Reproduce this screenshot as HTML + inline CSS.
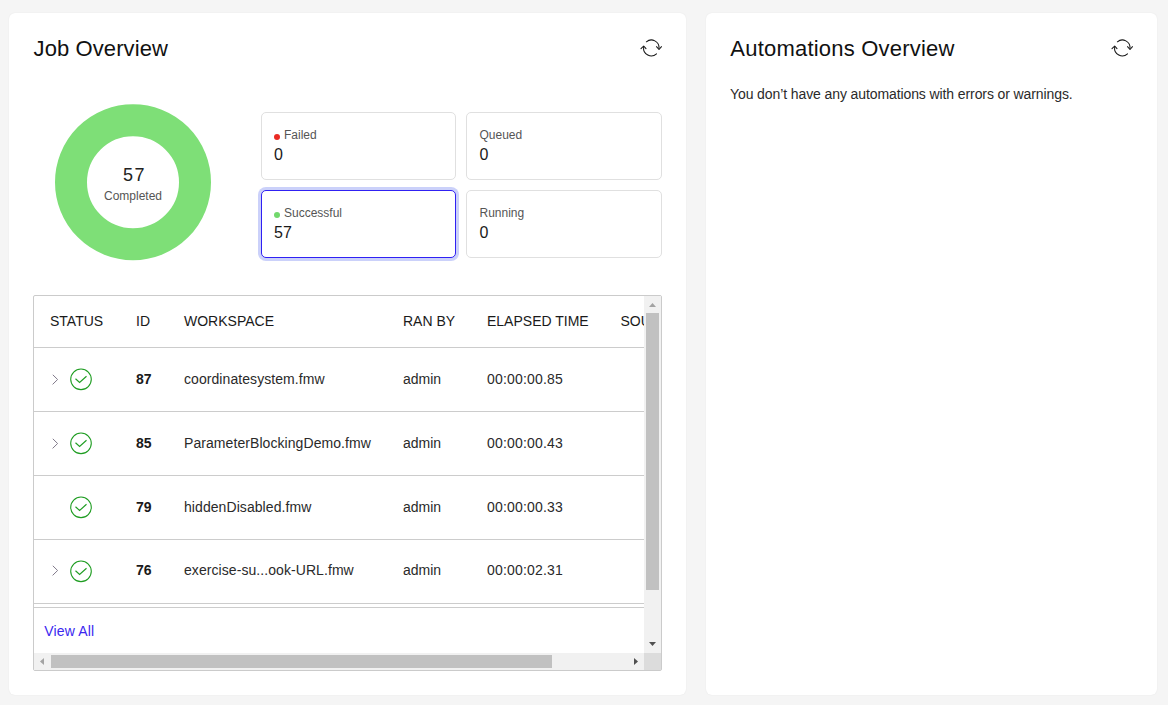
<!DOCTYPE html>
<html><head><meta charset="utf-8">
<style>
*{box-sizing:border-box;margin:0;padding:0}
html,body{width:1168px;height:705px;overflow:hidden;background:#f5f5f5;font-family:"Liberation Sans",sans-serif;color:#1f1f1f}
.a{position:absolute;white-space:nowrap}
.card{position:absolute;background:#fff;border-radius:6px;border-radius:6px;box-shadow:0 0 1.5px rgba(0,0,0,.08)}
.title{font-size:22px;line-height:22px;color:#111}
.stat{position:absolute;border:1px solid #e0e0e0;border-radius:5px;background:#fff}
.lbl{font-size:12px;line-height:12px;color:#555}
.val{font-size:16px;line-height:16px;color:#1a1a1a}
.dot{position:absolute;width:6px;height:6px;border-radius:50%}
.t14{font-size:14px;line-height:14px}
.hd{color:#1a1a1a}
.cell{color:#2a2a2a}
.b{font-weight:bold;color:#1a1a1a}
.hl{position:absolute;left:34px;width:610px;height:1px;background:#cccccc}
</style></head>
<body>
<!-- Job Overview card -->
<div class="card" style="left:9px;top:13px;width:677px;height:682px"></div>
<div class="a title" style="left:33.6px;top:38px;letter-spacing:0.09px">Job Overview</div>
<svg class="a" style="left:636px;top:33px" width="30" height="30" viewBox="636 33 30 30">
  <g fill="none" stroke="#161616" stroke-width="1.05" stroke-linecap="round" stroke-linejoin="round">
    <path d="M646.4 41.8 A7.7 7.7 0 0 1 659 48.3"/>
    <path d="M656.5 46.7 L659 49.5 L661.5 46.7"/>
    <path d="M656.5 53.8 A7.7 7.7 0 0 1 643.6 47.3"/>
    <path d="M641 48.7 L643.7 46 L646 48.7"/>
  </g>
</svg>

<!-- donut -->
<svg class="a" style="left:0;top:0" width="260" height="290">
  <circle cx="133" cy="182.2" r="62" fill="none" stroke="#7edf77" stroke-width="32"/>
</svg>
<div class="a" style="left:123px;top:166px;font-size:18px;line-height:18px;letter-spacing:1.6px;color:#222">57</div>
<div class="a" style="left:93px;top:190px;width:80px;text-align:center;font-size:12px;line-height:12px;color:#555">Completed</div>

<!-- stats -->
<div class="stat" style="left:261px;top:112px;width:195px;height:68px"></div>
<div class="dot" style="left:274px;top:133.8px;background:#ea2a24"></div>
<div class="a lbl" style="left:284px;top:129px">Failed</div>
<div class="a val" style="left:274px;top:147px">0</div>

<div class="stat" style="left:466px;top:112px;width:196px;height:68px"></div>
<div class="a lbl" style="left:479.5px;top:129px">Queued</div>
<div class="a val" style="left:479.5px;top:147px">0</div>

<div class="stat" style="left:261px;top:190px;width:195px;height:68px;border-color:#3021f3;box-shadow:0 0 0 3px #cbd1fa"></div>
<div class="dot" style="left:274px;top:211.8px;background:#72d86c"></div>
<div class="a lbl" style="left:284px;top:207px">Successful</div>
<div class="a val" style="left:274px;top:225px">57</div>

<div class="stat" style="left:466px;top:190px;width:196px;height:68px"></div>
<div class="a lbl" style="left:479.5px;top:207px">Running</div>
<div class="a val" style="left:479.5px;top:225px">0</div>

<!-- table container -->
<div class="a" style="left:33px;top:295px;width:629px;height:376px;border:1px solid #cbcbcb;border-radius:2px;background:#fff;overflow:hidden">
</div>
<div class="a t14 hd" style="left:50px;top:314px">STATUS</div>
<div class="a t14 hd" style="left:136px;top:314px">ID</div>
<div class="a t14 hd" style="left:184px;top:314px">WORKSPACE</div>
<div class="a t14 hd" style="left:403px;top:314px">RAN BY</div>
<div class="a t14 hd" style="left:487px;top:314px">ELAPSED TIME</div>
<div class="a" style="left:34px;top:296px;width:610px;height:50px;overflow:hidden">
  <div class="a t14 hd" style="left:586.5px;top:18px">SOURCE</div>
</div>
<div class="hl" style="top:347px"></div>
<div class="hl" style="top:411px"></div>
<div class="hl" style="top:475px"></div>
<div class="hl" style="top:539px"></div>
<div class="hl" style="top:603px"></div>
<div class="hl" style="top:607px"></div>

<!-- rows -->
<svg class="a" style="left:46px;top:366px" width="16" height="28"><path d="M6.8 8.8 L11.6 13.5 L6.6 18.4" fill="none" stroke="#7a7385" stroke-width="0.95"/></svg>
<svg class="a" style="left:66px;top:366px" width="30" height="28"><circle cx="15" cy="13.3" r="10.3" fill="none" stroke="#1f9d22" stroke-width="1.1"/><path d="M9.5 12.8 L13.6 16.5 L20.5 10.3" fill="none" stroke="#1f9d22" stroke-width="1.15"/></svg>
<div class="a t14 b" style="left:136px;top:372px">87</div>
<div class="a t14 cell" style="left:184px;top:372px;letter-spacing:0.07px">coordinatesystem.fmw</div>
<div class="a t14 cell" style="left:403px;top:372px">admin</div>
<div class="a t14 cell" style="left:487px;top:372px;letter-spacing:0.18px">00:00:00.85</div>
<svg class="a" style="left:46px;top:430px" width="16" height="28"><path d="M6.8 8.8 L11.6 13.5 L6.6 18.4" fill="none" stroke="#7a7385" stroke-width="0.95"/></svg>
<svg class="a" style="left:66px;top:430px" width="30" height="28"><circle cx="15" cy="13.3" r="10.3" fill="none" stroke="#1f9d22" stroke-width="1.1"/><path d="M9.5 12.8 L13.6 16.5 L20.5 10.3" fill="none" stroke="#1f9d22" stroke-width="1.15"/></svg>
<div class="a t14 b" style="left:136px;top:436px">85</div>
<div class="a t14 cell" style="left:184px;top:436px;letter-spacing:0.07px">ParameterBlockingDemo.fmw</div>
<div class="a t14 cell" style="left:403px;top:436px">admin</div>
<div class="a t14 cell" style="left:487px;top:436px;letter-spacing:0.18px">00:00:00.43</div>
<svg class="a" style="left:66px;top:494px" width="30" height="28"><circle cx="15" cy="13.3" r="10.3" fill="none" stroke="#1f9d22" stroke-width="1.1"/><path d="M9.5 12.8 L13.6 16.5 L20.5 10.3" fill="none" stroke="#1f9d22" stroke-width="1.15"/></svg>
<div class="a t14 b" style="left:136px;top:500px">79</div>
<div class="a t14 cell" style="left:184px;top:500px;letter-spacing:0.07px">hiddenDisabled.fmw</div>
<div class="a t14 cell" style="left:403px;top:500px">admin</div>
<div class="a t14 cell" style="left:487px;top:500px;letter-spacing:0.18px">00:00:00.33</div>
<svg class="a" style="left:46px;top:557px" width="16" height="28"><path d="M6.8 8.8 L11.6 13.5 L6.6 18.4" fill="none" stroke="#7a7385" stroke-width="0.95"/></svg>
<svg class="a" style="left:66px;top:557.5px" width="30" height="28"><circle cx="15" cy="13.3" r="10.3" fill="none" stroke="#1f9d22" stroke-width="1.1"/><path d="M9.5 12.8 L13.6 16.5 L20.5 10.3" fill="none" stroke="#1f9d22" stroke-width="1.15"/></svg>
<div class="a t14 b" style="left:136px;top:563px">76</div>
<div class="a t14 cell" style="left:184px;top:563px;letter-spacing:0.07px">exercise-su...ook-URL.fmw</div>
<div class="a t14 cell" style="left:403px;top:563px">admin</div>
<div class="a t14 cell" style="left:487px;top:563px;letter-spacing:0.18px">00:00:02.31</div>
<div class="a t14" style="left:44.3px;top:624px;color:#3b27ef;letter-spacing:0.15px">View All</div>

<!-- scrollbars -->
<div class="a" style="left:644px;top:296px;width:17px;height:357px;background:#f1f1f1"></div>
<div class="a" style="left:646px;top:313px;width:13px;height:277px;background:#c1c1c1"></div>
<svg class="a" style="left:644px;top:296px" width="17" height="17"><path d="M5 11 L8.5 7 L12 11 Z" fill="#a3a3a3"/></svg>
<svg class="a" style="left:644px;top:636px" width="17" height="17"><path d="M5 6 L8.5 10 L12 6 Z" fill="#505050"/></svg>
<div class="a" style="left:34px;top:653px;width:610px;height:17px;background:#f1f1f1"></div>
<div class="a" style="left:51px;top:655px;width:501px;height:13px;background:#c1c1c1"></div>
<svg class="a" style="left:34px;top:653px" width="17" height="17"><path d="M10 5 L6 8.5 L10 12 Z" fill="#a3a3a3"/></svg>
<svg class="a" style="left:627px;top:653px" width="17" height="17"><path d="M7 5 L11 8.5 L7 12 Z" fill="#505050"/></svg>
<div class="a" style="left:644px;top:653px;width:17px;height:17px;background:#dcdcdc"></div>

<!-- Automations card -->
<div class="card" style="left:706px;top:13px;width:451px;height:682px"></div>
<div class="a title" style="left:730.3px;top:38px;letter-spacing:0.21px">Automations Overview</div>
<svg class="a" style="left:1107px;top:33px" width="30" height="30" viewBox="636 33 30 30">
  <g fill="none" stroke="#161616" stroke-width="1.05" stroke-linecap="round" stroke-linejoin="round">
    <path d="M646.4 41.8 A7.7 7.7 0 0 1 659 48.3"/>
    <path d="M656.5 46.7 L659 49.5 L661.5 46.7"/>
    <path d="M656.5 53.8 A7.7 7.7 0 0 1 643.6 47.3"/>
    <path d="M641 48.7 L643.7 46 L646 48.7"/>
  </g>
</svg>
<div class="a t14" style="left:730px;top:87px;color:#2a2a2a;letter-spacing:-0.1px">You don’t have any automations with errors or warnings.</div>
</body></html>
